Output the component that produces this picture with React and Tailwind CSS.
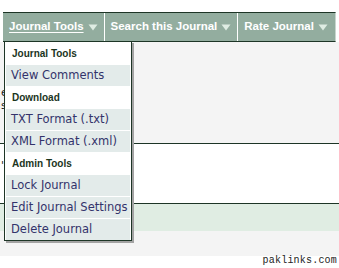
import React from 'react'

const navItems = [
  { label: 'Journal Tools', active: true },
  { label: 'Search this Journal' },
  { label: 'Rate Journal' },
]

const menu = [
  { type: 'header', label: 'Journal Tools' },
  { type: 'item', label: 'View Comments' },
  { type: 'header', label: 'Download' },
  { type: 'item', label: 'TXT Format (.txt)' },
  { type: 'item', label: 'XML Format (.xml)' },
  { type: 'header', label: 'Admin Tools' },
  { type: 'item', label: 'Lock Journal' },
  { type: 'item', label: 'Edit Journal Settings' },
  { type: 'item', label: 'Delete Journal' },
]

function Arrow() {
  return (
    <svg width="10" height="7" viewBox="0 0 10 7" className="shrink-0">
      <path d="M0.5 0.5 L9.5 0.5 L5 6.5 Z" fill="#dfece3" />
    </svg>
  )
}

export default function App() {
  const sans = { fontFamily: '"Liberation Sans", Arial, sans-serif' }
  const verdana = { fontFamily: '"DejaVu Sans", Verdana, sans-serif' }

  return (
    <div className="relative w-[339px] h-[268px] bg-white overflow-hidden" style={sans}>
      <div className="h-[12px]" />

      {/* nav bar */}
      <div className="ml-[3px] mr-[3px] flex h-[30px] border-y border-[#1d3526] bg-[#93ad9f] border-r border-r-[#c9d6cf]">
        {navItems.map((item, i) => (
          <div
            key={item.label}
            className={`flex items-center gap-[4px] px-[6px] ${i > 0 ? 'border-l border-white' : ''}`}
          >
            <span
              className={`text-[11.5px] font-bold text-white ${item.active ? 'underline underline-offset-2' : ''}`}
            >
              {item.label}
            </span>
            <Arrow />
          </div>
        ))}
      </div>

      {/* page content */}
      <div className="flex flex-col">
        <div className="h-[101px] bg-[#f4f4f4] pt-[44px] pl-px text-[11px] text-[#222] leading-[13px]" style={verdana}>
          <div>es</div>
          <div>s</div>
        </div>
        <div className="h-px bg-[#1d3526]" />
        <div className="h-[59px] bg-white pt-[14px] pl-px text-[11px] text-[#222]" style={verdana}>
          <div>'</div>
        </div>
        <div className="h-px bg-[#1d3526]" />
        <div className="h-[27px] bg-[#e0ede3]" />
        <div className="h-[25px] bg-[#f4f4f4]" />
        <div className="flex h-[12px] justify-end pr-[2px]">
          <span
            className="text-[10px] leading-[10px] tracking-[0.2px] text-[#222]"
            style={{ fontFamily: '"Liberation Mono", "Courier New", monospace' }}
          >
            paklinks.com
          </span>
        </div>
      </div>

      {/* dropdown */}
      <div
        className="absolute left-[4px] top-[41px] w-[128px] border border-[#1d3526] bg-white px-px shadow-[2px_2px_0_#a3a3a3]"
      >
        {menu.map(row =>
          row.type === 'header' ? (
            <div
              key={row.label}
              className="flex h-[22px] items-center pl-[6px] text-[10px] font-bold text-[#1b351d]"
            >
              {row.label}
            </div>
          ) : (
            <div key={row.label} className="h-[22px] border-t border-white">
              <div
                className="flex h-full items-center bg-[#e3ebea] pl-[5px] text-[11.5px] text-[#33336b]"
                style={verdana}
              >
                {row.label}
              </div>
            </div>
          )
        )}
      </div>
    </div>
  )
}
